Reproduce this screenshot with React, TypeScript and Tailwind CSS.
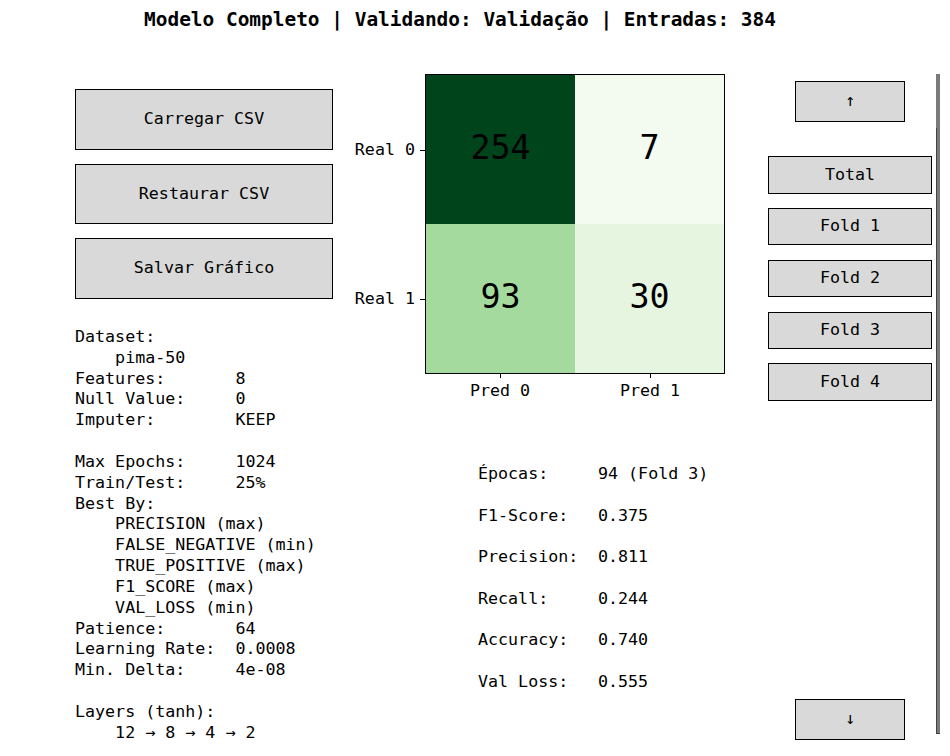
import React from 'react';

const mono = "font-['DejaVu_Sans_Mono',monospace]";

const leftLines = [
    'Dataset:',
    '    pima-50',
    'Features:       8',
    'Null Value:     0',
    'Imputer:        KEEP',
    '',
    'Max Epochs:     1024',
    'Train/Test:     25%',
    'Best By:',
    '    PRECISION (max)',
    '    FALSE_NEGATIVE (min)',
    '    TRUE_POSITIVE (max)',
    '    F1_SCORE (max)',
    '    VAL_LOSS (min)',
    'Patience:       64',
    'Learning Rate:  0.0008',
    'Min. Delta:     4e-08',
    '',
    'Layers (tanh):',
    '    12 → 8 → 4 → 2',
];

const metrics = [
    ['Épocas:', '94 (Fold 3)'],
    ['F1-Score:', '0.375'],
    ['Precision:', '0.811'],
    ['Recall:', '0.244'],
    ['Accuracy:', '0.740'],
    ['Val Loss:', '0.555'],
];

// cores do colormap Greens
const cells = [
    { value: 254, bg: 'bg-[#00441b]' },
    { value: 7, bg: 'bg-[#f3faf0]' },
    { value: 93, bg: 'bg-[#a4da9e]' },
    { value: 30, bg: 'bg-[#e5f5e0]' },
];

const Btn: React.FC<{ label: string; className: string }> = ({ label, className }) => (
    <div
        className={`flex items-center justify-center bg-[#d9d9d9] border border-black text-black text-[16.67px] leading-none ${className}`}
    >
        {label}
    </div>
);

export default function App() {
    return (
        <div className={`w-[950px] h-[756px] bg-white text-black overflow-hidden ${mono}`}>
            {/* título */}
            <div className="w-[920px] h-[40px] flex items-center justify-center">
                <span className="text-[19.44px] font-bold leading-[24px] whitespace-pre">
                    Modelo Completo | Validando: Validação | Entradas: 384
                </span>
            </div>

            <div className="flex items-start h-[716px]">
                {/* coluna esquerda */}
                <div className="ml-[75px] w-[258px] mt-[49px] flex flex-col">
                    <Btn label="Carregar CSV" className="h-[61px]" />
                    <Btn label="Restaurar CSV" className="h-[60px] mt-[14px]" />
                    <Btn label="Salvar Gráfico" className="h-[61px] mt-[14px]" />
                    <div className="mt-[28px] text-[16.67px] leading-[20.84px] whitespace-pre">
                        {leftLines.map((line, i) => (
                            <div key={i} className="h-[20.84px]">
                                {line}
                            </div>
                        ))}
                    </div>
                </div>

                {/* matriz de confusão */}
                <div className="w-[392px] mt-[34px] flex flex-col">
                    <div className="flex">
                        <div className="w-[92px] flex flex-col">
                            {['Real 0', 'Real 1'].map((label) => (
                                <div key={label} className="h-[149.5px] pt-[3px] flex items-center justify-end">
                                    <span className="text-[16.67px] leading-none whitespace-pre">{label}</span>
                                    <div className="w-[5px] h-px bg-black ml-[5px]" />
                                </div>
                            ))}
                        </div>
                        <div className="w-[300px] h-[300px] border border-black grid grid-cols-2 grid-rows-2">
                            {cells.map((c) => (
                                <div key={c.value} className={`${c.bg} flex items-center justify-center pb-[3px]`}>
                                    <span className="text-[33.33px] leading-none">{c.value}</span>
                                </div>
                            ))}
                        </div>
                    </div>
                    <div className="ml-[92px] w-[300px] grid grid-cols-2">
                        {['Pred 0', 'Pred 1'].map((label) => (
                            <div key={label} className="flex flex-col items-center">
                                <div className="w-px h-[4px] bg-black" />
                                <div className="mt-[3px] text-[16.67px] leading-[20.84px] whitespace-pre">{label}</div>
                            </div>
                        ))}
                    </div>

                    {/* métricas */}
                    <div className="ml-[145px] mt-[62px] text-[16.67px] leading-[20.84px] whitespace-pre">
                        {metrics.map(([k, v]) => (
                            <div key={k} className="flex h-[41.67px]">
                                <span className="w-[120px]">{k}</span>
                                <span>{v}</span>
                            </div>
                        ))}
                    </div>
                </div>

                {/* coluna direita */}
                <div className="ml-[43px] w-[164px] flex flex-col items-center">
                    <Btn label="↑" className="w-[110px] h-[41px] mt-[41px]" />
                    <Btn label="Total" className="w-[164px] h-[38px] mt-[34px]" />
                    <Btn label="Fold 1" className="w-[164px] h-[37px] mt-[14px]" />
                    <Btn label="Fold 2" className="w-[164px] h-[37px] mt-[15px]" />
                    <Btn label="Fold 3" className="w-[164px] h-[37px] mt-[15px]" />
                    <Btn label="Fold 4" className="w-[164px] h-[38px] mt-[14px]" />
                    <Btn label="↓" className="w-[110px] h-[41px] mt-[298px]" />
                </div>

                {/* barra de rolagem */}
                <div className="ml-[4px] mt-[34px] w-[4px] h-[660px] flex flex-col bg-[#7a7a7a]">
                    <div className="h-[54px]" />
                    <div className="flex-1 border-l border-b border-[#444]" />
                </div>
            </div>
        </div>
    );
}
